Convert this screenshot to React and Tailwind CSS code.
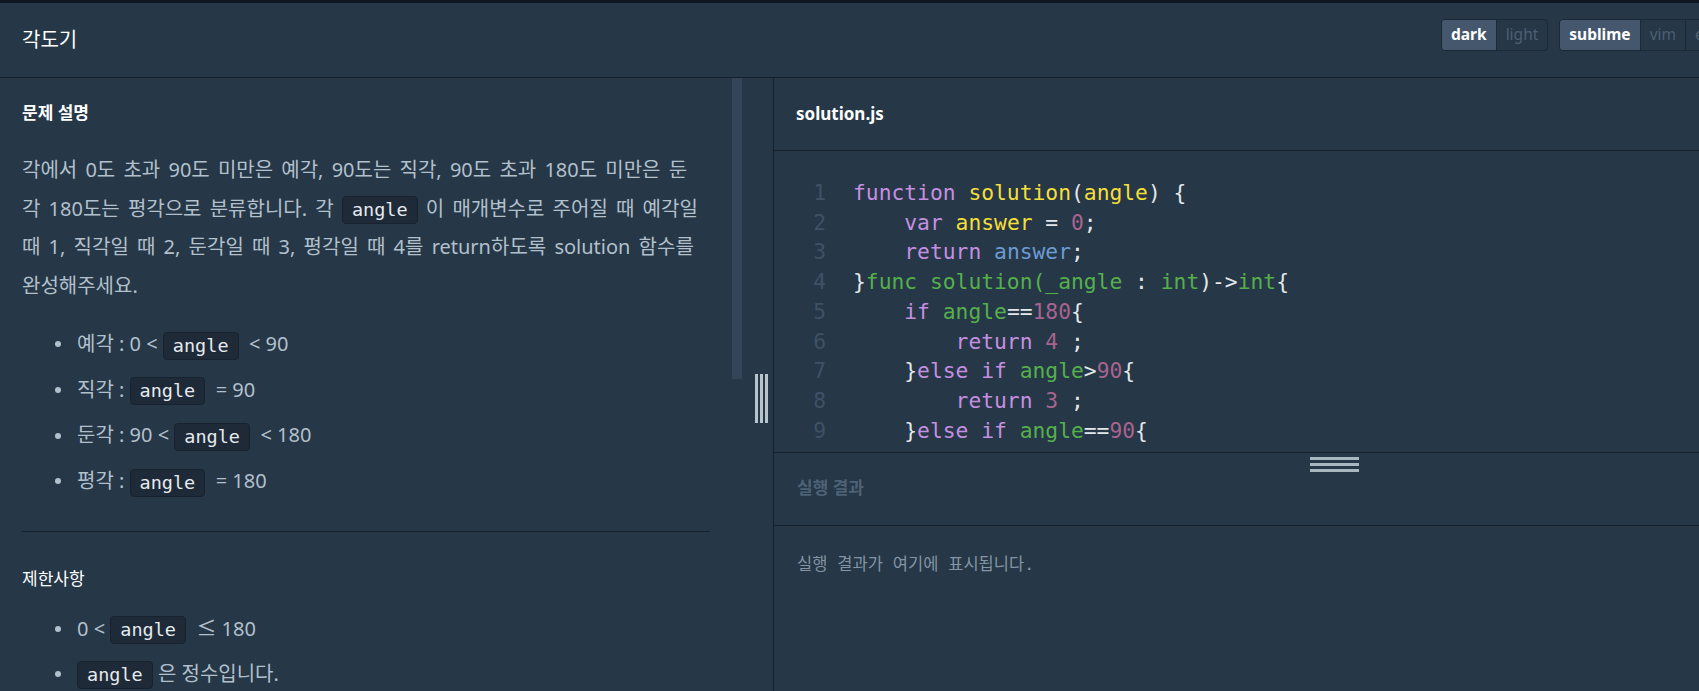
import React from 'react';

// 코드 색상
const C = {
  k: 'text-[#c58fe0]',
  y: 'text-[#f5df38]',
  b: 'text-[#6c9bd2]',
  g: 'text-[#55b04b]',
  n: 'text-[#a8648f]',
  w: 'text-[#e3e7ea]',
};

const codeLines = [
  [['k', 'function '], ['y', 'solution'], ['w', '('], ['y', 'angle'], ['w', ') {']],
  [['w', '    '], ['k', 'var '], ['y', 'answer'], ['w', ' = '], ['n', '0'], ['w', ';']],
  [['w', '    '], ['k', 'return '], ['b', 'answer'], ['w', ';']],
  [['w', '}'], ['g', 'func solution(_angle'], ['w', ' : '], ['g', 'int'], ['w', ')->'], ['g', 'int'], ['w', '{']],
  [['w', '    '], ['k', 'if '], ['g', 'angle'], ['w', '=='], ['n', '180'], ['w', '{']],
  [['w', '        '], ['k', 'return '], ['n', '4'], ['w', ' ;']],
  [['w', '    }'], ['k', 'else if '], ['g', 'angle'], ['w', '>'], ['n', '90'], ['w', '{']],
  [['w', '        '], ['k', 'return '], ['n', '3'], ['w', ' ;']],
  [['w', '    }'], ['k', 'else if '], ['g', 'angle'], ['w', '=='], ['n', '90'], ['w', '{']],
];

const Chip = ({ children }) => (
  <code className="inline-block h-[28px] px-[9px] rounded-[4px] bg-[#1f2a39] border border-[#18222e] text-[#e6eaee] text-[18.5px] leading-[26px] align-middle [word-spacing:0] font-['DejaVu_Sans_Mono',monospace]">
    {children}
  </code>
);

const Item = ({ children }) => (
  <li className="flex items-center pl-[33px] leading-[38.5px]">
    <span className="w-[6px] h-[6px] rounded-full bg-[#b2c0cc] shrink-0" />
    <span className="ml-[16px] whitespace-pre">{children}</span>
  </li>
);

const Toggle = ({ items }) => (
  <div className="flex h-[32px] rounded-[4px] border border-[#1c2935] overflow-hidden shrink-0">
    {items.map((it, i) => (
      <div
        key={it.label}
        className={
          'flex items-center px-[9px] text-[15.5px] ' +
          (it.on ? 'bg-[#44576c] text-white font-bold' : 'text-[#4d5f73]') +
          (i > 0 ? ' border-l border-[#1c2935]' : '')
        }
      >
        {it.label}
      </div>
    ))}
  </div>
);

export default function App() {
  return (
    <div className="h-[691px] w-full bg-[#263747] flex flex-col overflow-hidden border-t-[3px] border-[#0f1820] font-['Noto_Sans','Noto_Sans_CJK_KR',sans-serif]">
      {/* 헤더 */}
      <header className="h-[75px] shrink-0 flex items-start pl-[22px] border-b border-[#17212c]">
        <h1 className="mt-[23px] text-[20px] leading-[28px] text-white">각도기</h1>
        <div className="flex-1" />
        <div className="mt-[16px] w-[258px] shrink-0 overflow-hidden flex gap-[11px]">
          <Toggle items={[{ label: 'dark', on: true }, { label: 'light' }]} />
          <Toggle items={[{ label: 'sublime', on: true }, { label: 'vim' }, { label: 'emacs' }]} />
        </div>
      </header>

      <div className="flex flex-1 min-h-0">
        {/* 왼쪽: 문제 설명 */}
        <div className="w-[774px] shrink-0 flex border-r border-[#17212c]">
          <div className="w-[732px] shrink-0 overflow-hidden pt-[23px] px-[22px] text-[#b2c0cc] text-[20px] [word-spacing:3px]">
            <h2 className="text-[17px] leading-[24px] font-bold text-white [word-spacing:0]">문제 설명</h2>
            <p className="mt-[26px] leading-[38.5px] whitespace-nowrap">
              각에서 0도 초과 90도 미만은 예각, 90도는 직각, 90도 초과 180도 미만은 둔<br />
              각 180도는 평각으로 분류합니다. 각 <Chip>angle</Chip> 이 매개변수로 주어질 때 예각일<br />
              때 1, 직각일 때 2, 둔각일 때 3, 평각일 때 4를 return하도록 solution 함수를<br />
              완성해주세요.
            </p>
            <ul className="mt-[20px] flex flex-col gap-[7.2px] [word-spacing:0]">
              <Item>예각 : 0 &lt; <Chip>angle</Chip>  &lt; 90</Item>
              <Item>직각 : <Chip>angle</Chip>  = 90</Item>
              <Item>둔각 : 90 &lt; <Chip>angle</Chip>  &lt; 180</Item>
              <Item>평각 : <Chip>angle</Chip>  = 180</Item>
            </ul>
            <hr className="mt-[30px] border-0 border-t border-[#17212c]" />
            <h3 className="mt-[35px] text-[17px] leading-[24px] text-white">제한사항</h3>
            <ul className="mt-[19px] flex flex-col gap-[6.5px] [word-spacing:0]">
              <Item>0 &lt; <Chip>angle</Chip>  ≤ 180</Item>
              <Item><Chip>angle</Chip> 은 정수입니다.</Item>
            </ul>
          </div>
          {/* 스크롤바 */}
          <div className="w-[10px] shrink-0">
            <div className="h-[301px] bg-[#34455a]" />
          </div>
          {/* 리사이즈 핸들 */}
          <div className="flex-1 pt-[296px] pl-[13px]">
            <div className="flex gap-[2px] h-[49px]">
              <div className="w-[3px] bg-[#b8c4cc]" />
              <div className="w-[3px] bg-[#b8c4cc]" />
              <div className="w-[3px] bg-[#b8c4cc]" />
            </div>
          </div>
        </div>

        {/* 오른쪽: 에디터 */}
        <div className="flex-1 min-w-0 flex flex-col">
          <div className="h-[73px] shrink-0 flex items-center pl-[22px] border-b border-[#17212c]">
            <span className="text-[17px] font-bold text-white">solution.js</span>
          </div>
          <div className="h-[302px] shrink-0 overflow-hidden pt-[27px] border-b border-[#17212c] text-[21.3px] leading-[29.7px] font-['DejaVu_Sans_Mono',monospace]">
            {codeLines.map((toks, i) => (
              <div key={i} className="flex">
                <span className="w-[52px] text-right text-[#3f5166] shrink-0">{i + 1}</span>
                <span className="pl-[27px] whitespace-pre">
                  {toks.map(([c, t], j) => (
                    <span key={j} className={C[c]}>{t}</span>
                  ))}
                </span>
              </div>
            ))}
          </div>
          <div className="h-[73px] shrink-0 flex flex-col border-b border-[#17212c]">
            <div className="ml-[536px] mt-[4px] flex flex-col gap-[3px] w-[49px]">
              <div className="h-[3px] bg-[#a9b7c1]" />
              <div className="h-[3px] bg-[#a9b7c1]" />
              <div className="h-[3px] bg-[#a9b7c1]" />
            </div>
            <div className="pl-[23px] mt-[4px] text-[17px] leading-[24px] font-bold text-[#4d6277]">실행 결과</div>
          </div>
          <div className="pl-[23px] pt-[27px] text-[16.5px] text-[#8394a4] font-['DejaVu_Sans_Mono','Noto_Sans_CJK_KR',monospace]">
            실행 결과가 여기에 표시됩니다.
          </div>
        </div>
      </div>
    </div>
  );
}
